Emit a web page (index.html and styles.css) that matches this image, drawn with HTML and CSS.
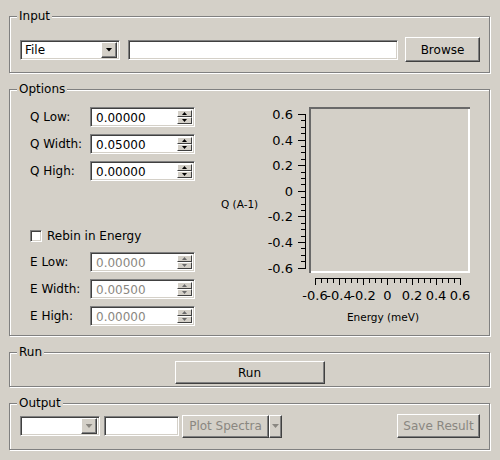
FILE: index.html
```html
<!DOCTYPE html>
<html lang="en">
<head>
    <meta charset="UTF-8">
    <title>Dynamic Structure Factor</title>
    <link rel="stylesheet" href="styles.css">
</head>
<body>
    <div class="window">
        <fieldset class="group">
            <legend>Input</legend>
            <div class="input-row">
                <div class="combo combo-file">
                    <span class="combo-text">File</span>
                    <span class="combo-btn"><span class="tri-down"></span></span>
                </div>
                <div class="entry entry-path"></div>
                <button class="btn btn-browse">Browse</button>
            </div>
        </fieldset>

        <fieldset class="group">
            <legend>Options</legend>
            <div class="options-body">
                <div class="form">
                    <div class="field">
                        <span class="field-label">Q Low:</span>
                        <div class="spin">
                            <span class="spin-val">0.00000</span>
                            <span class="spin-btns">
                                <span class="spin-btn"><span class="tri-up"></span></span>
                                <span class="spin-btn"><span class="tri-dn"></span></span>
                            </span>
                        </div>
                    </div>
                    <div class="field">
                        <span class="field-label">Q Width:</span>
                        <div class="spin">
                            <span class="spin-val">0.05000</span>
                            <span class="spin-btns">
                                <span class="spin-btn"><span class="tri-up"></span></span>
                                <span class="spin-btn"><span class="tri-dn"></span></span>
                            </span>
                        </div>
                    </div>
                    <div class="field">
                        <span class="field-label">Q High:</span>
                        <div class="spin">
                            <span class="spin-val">0.00000</span>
                            <span class="spin-btns">
                                <span class="spin-btn"><span class="tri-up"></span></span>
                                <span class="spin-btn"><span class="tri-dn"></span></span>
                            </span>
                        </div>
                    </div>

                    <div class="check-row">
                        <span class="check"></span>
                        <span>Rebin in Energy</span>
                    </div>

                    <div class="field">
                        <span class="field-label">E Low:</span>
                        <div class="spin disabled">
                            <span class="spin-val">0.00000</span>
                            <span class="spin-btns">
                                <span class="spin-btn"><span class="tri-up"></span></span>
                                <span class="spin-btn"><span class="tri-dn"></span></span>
                            </span>
                        </div>
                    </div>
                    <div class="field">
                        <span class="field-label">E Width:</span>
                        <div class="spin disabled">
                            <span class="spin-val">0.00500</span>
                            <span class="spin-btns">
                                <span class="spin-btn"><span class="tri-up"></span></span>
                                <span class="spin-btn"><span class="tri-dn"></span></span>
                            </span>
                        </div>
                    </div>
                    <div class="field">
                        <span class="field-label">E High:</span>
                        <div class="spin disabled">
                            <span class="spin-val">0.00000</span>
                            <span class="spin-btns">
                                <span class="spin-btn"><span class="tri-up"></span></span>
                                <span class="spin-btn"><span class="tri-dn"></span></span>
                            </span>
                        </div>
                    </div>
                </div>

                <!-- empty plot: frame, axes and tick labels -->
                <svg class="plot" width="270" height="230" viewBox="0 0 270 230">
                    <rect x="99" y="7" width="161" height="166" fill="#fff"/>
                    <rect x="99" y="7" width="159" height="164" fill="#d4d0c8"/>
                    <rect x="99" y="7" width="161" height="2" fill="#696969"/>
                    <rect x="99" y="7" width="2" height="166" fill="#696969"/>

                    <g stroke="#000" stroke-width="1" fill="none">
                        <path d="M95.5 14V169"/>
                        <path d="M88 14.5H96M91 20.5H96M91 27.5H96M91 33.5H96M88 40.5H96M91 46.5H96M91 52.5H96M91 59.5H96M88 65.5H96M91 72.5H96M91 78.5H96M91 84.5H96M88 91.5H96M91 97.5H96M91 104.5H96M91 110.5H96M88 116.5H96M91 123.5H96M91 129.5H96M91 136.5H96M88 142.5H96M91 148.5H96M91 155.5H96M91 161.5H96M88 168.5H96"/>
                        <path d="M105 178.5H251"/>
                        <path d="M105.5 178V185M111.5 178V183M117.5 178V183M123.5 178V183M129.5 178V185M135.5 178V183M141.5 178V183M147.5 178V183M153.5 178V185M159.5 178V183M165.5 178V183M171.5 178V183M177.5 178V185M184.5 178V183M190.5 178V183M196.5 178V183M202.5 178V185M208.5 178V183M214.5 178V183M220.5 178V183M226.5 178V185M232.5 178V183M238.5 178V183M244.5 178V183M250.5 178V185"/>
                    </g>

                    <g class="tick-label" text-anchor="end">
                        <text x="83" y="19">0.6</text>
                        <text x="83" y="45">0.4</text>
                        <text x="83" y="70">0.2</text>
                        <text x="83" y="96">0</text>
                        <text x="83" y="121">-0.2</text>
                        <text x="83" y="147">-0.4</text>
                        <text x="83" y="173">-0.6</text>
                    </g>
                    <g class="tick-label" text-anchor="middle">
                        <text x="105" y="200">-0.6</text>
                        <text x="129" y="200">-0.4</text>
                        <text x="153" y="200">-0.2</text>
                        <text x="177.5" y="200">0</text>
                        <text x="202" y="200">0.2</text>
                        <text x="226" y="200">0.4</text>
                        <text x="250" y="200">0.6</text>
                    </g>

                    <text class="axis-title" x="11" y="108">Q (A-1)</text>
                    <text class="axis-title" x="173" y="221" text-anchor="middle">Energy (meV)</text>
                </svg>
            </div>
        </fieldset>

        <fieldset class="group">
            <legend>Run</legend>
            <div class="run-row">
                <button class="btn btn-run">Run</button>
            </div>
        </fieldset>

        <fieldset class="group">
            <legend>Output</legend>
            <div class="output-row">
                <div class="combo combo-out">
                    <span class="combo-text"></span>
                    <span class="combo-btn disabled"><span class="tri-down"></span></span>
                </div>
                <div class="entry entry-out"></div>
                <div class="split">
                    <button class="btn btn-plot" disabled>Plot Spectra</button>
                    <button class="btn btn-menu" disabled><span class="tri-down"></span></button>
                </div>
                <button class="btn btn-save" disabled>Save Result</button>
            </div>
        </fieldset>
    </div>
</body>
</html>
```

FILE: styles.css
```css
body {
    margin: 0;
    background: #d4d0c8;
    font-family: "DejaVu Sans", sans-serif;
    font-size: 12px;
    color: #000;
}
.window {
    padding: 9px 10px 0 9px;
}

/* group boxes */
.group {
    margin: 0 0 9px;
    padding: 0;
    min-width: 0;
    border: 1px solid #808080;
    box-shadow: 1px 1px 0 #fff, inset 1px 1px 0 #fff;
}
.group legend {
    margin-left: 7px;
    padding: 0 2px;
    height: 14px;
    line-height: 14px;
    background: #d4d0c8;
}

/* sunken / raised widgets */
.entry, .combo, .spin, .check {
    box-sizing: border-box;
    background: #fff;
    border: 1px solid;
    border-color: #808080 #fff #fff #808080;
    box-shadow: inset 1px 1px 0 #404040, inset -1px -1px 0 #d4d0c8;
}
.btn {
    box-sizing: border-box;
    font: inherit;
    color: #000;
    background: #d4d0c8;
    border: 1px solid;
    border-color: #fff #404040 #404040 #fff;
    box-shadow: inset -1px -1px 0 #808080;
    padding: 0;
    cursor: pointer;
}
.btn:disabled {
    color: #8a8781;
    cursor: default;
}

.combo {
    display: flex;
    align-items: center;
    height: 20px;
    padding: 2px;
}
.combo-text {
    flex: 1;
    padding-left: 2px;
    line-height: 16px;
}
.combo-btn {
    box-sizing: border-box;
    width: 16px;
    height: 16px;
    display: flex;
    align-items: center;
    justify-content: center;
    background: #d4d0c8;
    border: 1px solid;
    border-color: #fff #404040 #404040 #fff;
    box-shadow: inset -1px -1px 0 #808080;
}
.tri-down {
    width: 7px;
    height: 4px;
    background: #000;
    clip-path: polygon(0 0, 100% 0, 50% 100%);
}
.combo-btn.disabled .tri-down,
.btn-menu .tri-down {
    background: #8a8781;
}

/* input row */
.input-row {
    display: flex;
    align-items: center;
    height: 25px;
    padding: 14px 9px 10px 10px;
}
.combo-file {
    width: 100px;
}
.entry {
    height: 20px;
}
.entry-path {
    flex: 1;
    margin-left: 8px;
}
.btn-browse {
    width: 75px;
    height: 25px;
    margin-left: 7px;
}

/* options */
.options-body {
    display: flex;
    padding: 4px 0 0 20px;
}
.form {
    width: 165px;
    padding: 7px 0 9px;
}
.field {
    display: flex;
    align-items: center;
    height: 20px;
    margin-bottom: 7px;
}
.field:last-child {
    margin-bottom: 0;
}
.field-label {
    width: 60px;
}
.spin {
    display: flex;
    width: 105px;
    height: 20px;
    padding: 2px 2px 2px 5px;
}
.spin-val {
    flex: 1;
    line-height: 16px;
}
.spin.disabled .spin-val {
    color: #8a8781;
}
.spin-btns {
    display: flex;
    flex-direction: column;
    width: 15px;
}
.spin-btn {
    box-sizing: border-box;
    height: 8px;
    display: flex;
    align-items: center;
    justify-content: center;
    background: #d4d0c8;
    border: 1px solid;
    border-color: #fff #404040 #404040 #fff;
}
.tri-up, .tri-dn {
    width: 5px;
    height: 3px;
    background: #000;
}
.tri-up {
    clip-path: polygon(50% 0, 100% 100%, 0 100%);
}
.tri-dn {
    clip-path: polygon(0 0, 100% 0, 50% 100%);
}
.spin.disabled .tri-up,
.spin.disabled .tri-dn {
    background: #6a6a6a;
}

.check-row {
    display: flex;
    align-items: center;
    gap: 5px;
    height: 20px;
    margin: 45px 0 6px;
}
.check {
    width: 12px;
    height: 12px;
}

.plot {
    display: block;
    margin-left: 15px;
}
.tick-label {
    font-family: "DejaVu Sans", sans-serif;
    font-size: 13px;
    fill: #000;
}
.axis-title {
    font-family: "DejaVu Sans", sans-serif;
    font-size: 10.5px;
    fill: #000;
}

/* run */
.run-row {
    display: flex;
    justify-content: center;
    padding: 2px 0;
}
.btn-run {
    width: 150px;
    height: 23px;
}

/* output */
.output-row {
    display: flex;
    align-items: center;
    height: 24px;
    padding: 4px 9px 11px 10px;
}
.combo-out {
    width: 80px;
}
.entry-out {
    width: 75px;
    margin-left: 4px;
}
.split {
    display: flex;
    margin-left: 3px;
}
.btn-plot {
    width: 87px;
    height: 23px;
}
.btn-menu {
    width: 13px;
    height: 23px;
    display: flex;
    align-items: center;
    justify-content: center;
}
.btn-save {
    width: 83px;
    height: 24px;
    margin-left: auto;
}
```
